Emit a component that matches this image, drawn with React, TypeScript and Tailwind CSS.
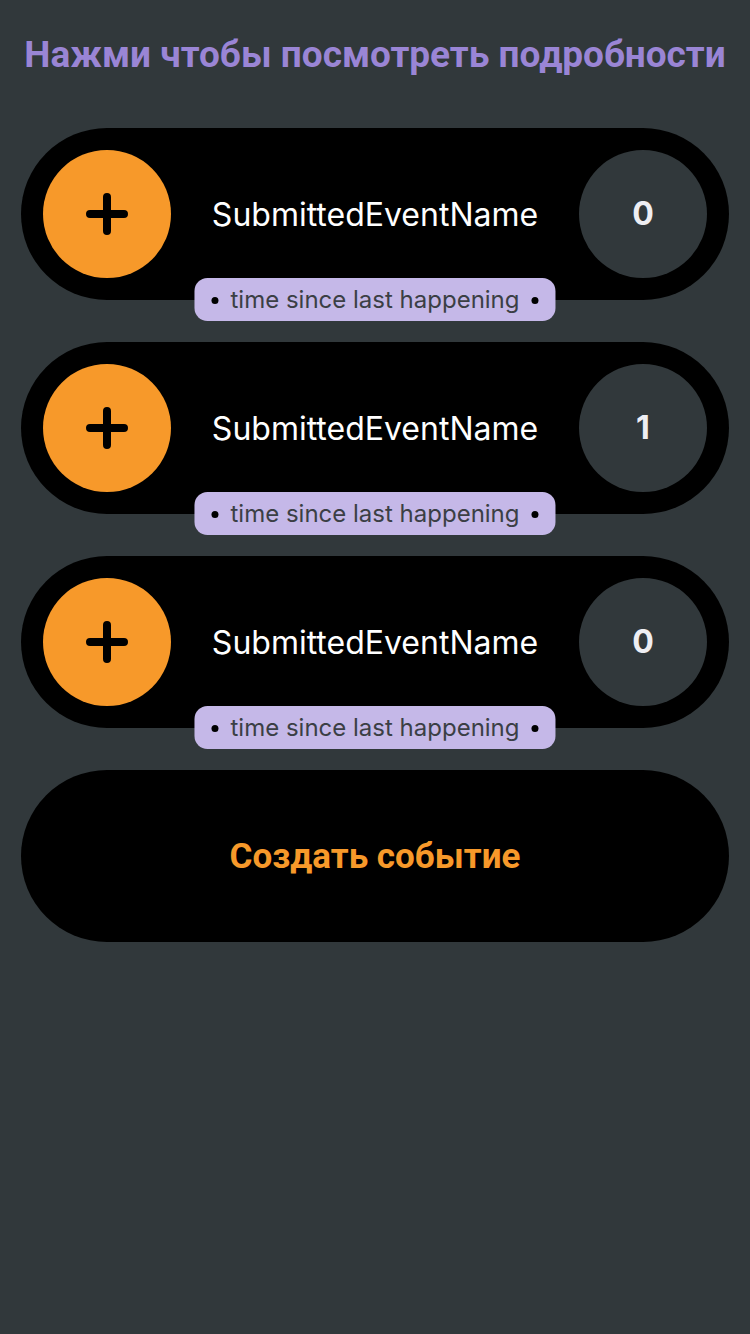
const events = [
  { name: 'SubmittedEventName', count: 0 },
  { name: 'SubmittedEventName', count: 1 },
  { name: 'SubmittedEventName', count: 0 },
];

function PlusIcon() {
  return (
    <svg width="48" height="48" viewBox="0 0 48 48" fill="none">
      <path d="M24 7v34M7 24h34" stroke="black" strokeWidth="8" strokeLinecap="round" />
    </svg>
  );
}

function EventCard({ name, count }: { name: string; count: number }) {
  return (
    <div className="relative flex h-[172px] w-full items-center justify-between rounded-full bg-black px-[22px]">
      {/* кнопка + */}
      <button className="flex h-[128px] w-[128px] items-center justify-center rounded-full bg-[#f7992a]">
        <PlusIcon />
      </button>

      <span className="pt-[2px] text-[32px] text-white">{name}</span>

      {/* счетчик */}
      <div className="flex h-[128px] w-[128px] items-center justify-center rounded-full bg-[#31383b] text-[32px] font-bold text-[#eeeef3]">
        {count}
      </div>

      {/* метка времени */}
      <div className="absolute left-1/2 top-[150px] flex h-[43px] -translate-x-1/2 items-center gap-[12px] whitespace-nowrap rounded-[13px] bg-[#c5b8e8] px-[17px] pt-[1px] text-[24px] text-[#3b3f45]">
        <span className="h-[7px] w-[7px] rounded-full bg-black" />
        <span>time since last happening</span>
        <span className="h-[7px] w-[7px] rounded-full bg-black" />
      </div>
    </div>
  );
}

export default function App() {
  return (
    <div className="min-h-[1334px] w-[750px] bg-[#31383b] px-[21px] font-['Inter','Noto_Sans',sans-serif]">
      <h1 className="pt-[32px] text-center font-['Roboto',sans-serif] text-[37px] font-bold leading-[46px] whitespace-nowrap text-[#9a85d5]">
        Нажми чтобы посмотреть подробности
      </h1>

      <div className="mt-[50px] flex flex-col gap-[42px]">
        {events.map((e, i) => (
          <EventCard key={i} name={e.name} count={e.count} />
        ))}

        <button className="flex h-[172px] w-full items-center justify-center rounded-full bg-black pt-[3px] font-['Roboto',sans-serif] text-[35px] font-bold text-[#f7992a]">
          Создать событие
        </button>
      </div>
    </div>
  );
}
